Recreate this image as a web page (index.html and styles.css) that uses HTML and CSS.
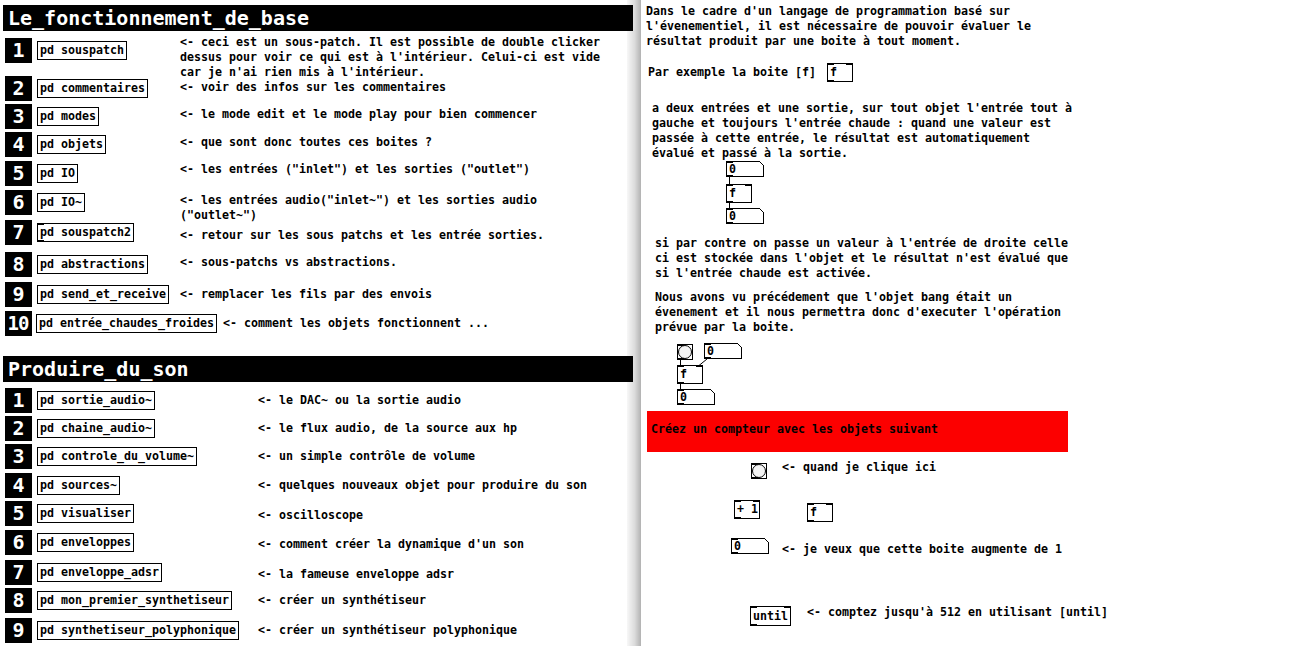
FILE: index.html
```html
<!DOCTYPE html>
<html lang="fr">
<head>
<meta charset="utf-8">
<title>Pd patch</title>
<link rel="stylesheet" href="styles.css">
</head>
<body>
<div class="desk">
  <section class="win-left">
    <div class="hdr">Le_fonctionnement_de_base</div>
    <div class="rows rows-a">
      <div class="row"><span class="num">1</span><span class="obj">pd souspatch</span><span class="cmt cmt-up">&lt;- ceci est un sous-patch. Il est possible de double clicker<br>dessus pour voir ce qui est à l'intérieur. Celui-ci est vide<br>car je n'ai rien mis à l'intérieur.</span></div>
      <div class="row"><span class="num">2</span><span class="obj">pd commentaires</span><span class="cmt">&lt;- voir des infos sur les commentaires</span></div>
      <div class="row"><span class="num">3</span><span class="obj">pd modes</span><span class="cmt">&lt;- le mode edit et le mode play pour bien commencer</span></div>
      <div class="row"><span class="num">4</span><span class="obj">pd objets</span><span class="cmt">&lt;- que sont donc toutes ces boites ?</span></div>
      <div class="row"><span class="num">5</span><span class="obj">pd IO</span><span class="cmt">&lt;- les entrées ("inlet") et les sorties ("outlet")</span></div>
      <div class="row"><span class="num">6</span><span class="obj">pd IO~</span><span class="cmt">&lt;- les entrées audio("inlet~") et les sorties audio<br>("outlet~")</span></div>
      <div class="row"><span class="num">7</span><span class="obj io">pd souspatch2</span><span class="cmt">&lt;- retour sur les sous patchs et les entrée sorties.</span></div>
      <div class="row"><span class="num">8</span><span class="obj">pd abstractions</span><span class="cmt">&lt;- sous-patchs vs abstractions.</span></div>
      <div class="row"><span class="num">9</span><span class="obj">pd send_et_receive</span><span class="cmt">&lt;- remplacer les fils par des envois</span></div>
      <div class="row row-wide"><span class="num num-2d">10</span><span class="obj">pd entrée_chaudes_froides</span><span class="cmt">&lt;- comment les objets fonctionnent ...</span></div>
    </div>

    <div class="hdr hdr-2">Produire_du_son</div>
    <div class="rows rows-b">
      <div class="row"><span class="num">1</span><span class="obj">pd sortie_audio~</span><span class="cmt">&lt;- le DAC~ ou la sortie audio</span></div>
      <div class="row"><span class="num">2</span><span class="obj">pd chaine_audio~</span><span class="cmt">&lt;- le flux audio, de la source aux hp</span></div>
      <div class="row"><span class="num">3</span><span class="obj">pd controle_du_volume~</span><span class="cmt">&lt;- un simple contrôle de volume</span></div>
      <div class="row"><span class="num">4</span><span class="obj">pd sources~</span><span class="cmt">&lt;- quelques nouveaux objet pour produire du son</span></div>
      <div class="row"><span class="num">5</span><span class="obj">pd visualiser</span><span class="cmt">&lt;- oscilloscope</span></div>
      <div class="row"><span class="num">6</span><span class="obj">pd enveloppes</span><span class="cmt">&lt;- comment créer la dynamique d'un son</span></div>
      <div class="row"><span class="num">7</span><span class="obj">pd enveloppe_adsr</span><span class="cmt">&lt;- la fameuse enveloppe adsr</span></div>
      <div class="row"><span class="num">8</span><span class="obj">pd mon_premier_synthetiseur</span><span class="cmt">&lt;- créer un synthétiseur</span></div>
      <div class="row"><span class="num">9</span><span class="obj">pd synthetiseur_polyphonique</span><span class="cmt">&lt;- créer un synthétiseur polyphonique</span></div>
    </div>
  </section>

  <section class="win-right">
    <svg class="wires" width="648" height="646" viewBox="0 0 648 646">
      <line x1="88.5" y1="176" x2="88.5" y2="184"/>
      <line x1="88.5" y1="203" x2="88.5" y2="208"/>
      <line x1="39.5" y1="360" x2="39.5" y2="365"/>
      <line x1="66" y1="359" x2="58" y2="365.5"/>
      <line x1="39.5" y1="384" x2="39.5" y2="389"/>
    </svg>

    <p class="node text t1">Dans le cadre d'un langage de programmation basé sur<br>l'évenementiel, il est nécessaire de pouvoir évaluer le<br>résultat produit par une boite à tout moment.</p>
    <p class="node text t2">Par exemple la boite [f]</p>
    <span class="node box io f1">f<i class="port-r"></i></span>
    <p class="node text t3">a deux entrées et une sortie, sur tout objet l'entrée tout à<br>gauche et toujours l'entrée chaude : quand une valeur est<br>passée à cette entrée, le résultat est automatiquement<br>évalué et passé à la sortie.</p>

    <span class="node atom io a1">0<i class="notch"></i></span>
    <span class="node box io f2">f<i class="port-r"></i></span>
    <span class="node atom io a2">0<i class="notch"></i></span>

    <p class="node text t4">si par contre on passe un valeur à l'entrée de droite celle<br>ci est stockée dans l'objet et le résultat n'est évalué que<br>si l'entrée chaude est activée.</p>
    <p class="node text t5">Nous avons vu précédement que l'objet bang était un<br>évenement et il nous permettra donc d'executer l'opération<br>prévue par la boite.</p>

    <span class="node bang io b1"><i class="dot"></i></span>
    <span class="node atom io a3">0<i class="notch"></i></span>
    <span class="node box io f3">f<i class="port-r"></i></span>
    <span class="node atom io a4">0<i class="notch"></i></span>

    <div class="node red">Créez un compteur avec les objets suivant</div>

    <span class="node bang io b2"><i class="dot"></i></span>
    <p class="node text t6">&lt;- quand je clique ici</p>

    <span class="node box io plus">+ 1<i class="port-r"></i></span>
    <span class="node box io f4">f<i class="port-r"></i></span>

    <span class="node atom io a5">0<i class="notch"></i></span>
    <p class="node text t7">&lt;- je veux que cette boite augmente de 1</p>

    <span class="node box io until">until<i class="port-r"></i></span>
    <p class="node text t8">&lt;- comptez jusqu'à 512 en utilisant [until]</p>
  </section>
</div>
</body>
</html>
```

FILE: styles.css
```css
html, body {
  margin: 0;
  padding: 0;
  background: #fff;
}

body {
  width: 1289px;
  height: 646px;
  overflow: hidden;
  font-family: "DejaVu Sans Mono", "Liberation Mono", monospace;
  font-weight: bold;
  font-size: 11.63px;
  color: #000;
}

.desk {
  position: relative;
  width: 1289px;
  height: 646px;
}

/* ---------- left window ---------- */
.win-left {
  padding-top: 5px;
  width: 641px;
}

.hdr {
  margin-left: 3px;
  width: 630px;
  height: 26px;
  box-sizing: border-box;
  padding-left: 5px;
  background: #000;
  color: #fff;
  font-size: 20px;
  line-height: 26px;
  font-weight: bold;
  white-space: nowrap;
}

.hdr-2 {
  margin-top: 15px;
}

.rows {
  display: grid;
}

.rows-a {
  margin-top: 7px;
  grid-template-rows: 38px 28px 28px 29px 29px 30px 32px 30px 29px 30px;
}

.rows-b {
  margin-top: 6px;
  grid-template-rows: 28px 28px 29px 28px 29px 30px 28px 30px 28px;
}

.row {
  display: grid;
  grid-template-columns: 37px 143px 1fr;
  align-items: start;
}

.rows-b .row {
  grid-template-columns: 37px 221px 1fr;
}

.row.row-wide {
  grid-template-columns: 36px auto 1fr;
}

.row-wide .cmt {
  margin-left: 6px;
}

.num {
  margin-left: 5px;
  width: 27px;
  height: 25px;
  background: #000;
  color: #fff;
  font-size: 20px;
  line-height: 25px;
  text-align: center;
  font-weight: bold;
}

.num-2d {
  letter-spacing: -1px;
  font-size: 19px;
  text-indent: -1px;
}

.obj {
  position: relative;
  justify-self: start;
  margin-top: 3px;
  height: 19px;
  box-sizing: border-box;
  border: 1px solid #000;
  padding: 0 2px;
  line-height: 17px;
  white-space: nowrap;
}

.cmt {
  margin-top: 3px;
  line-height: 15px;
  white-space: nowrap;
}

/* comments in Pd are placed freely; small per-row offsets */
.rows-a .row:nth-child(2) .cmt { margin-top: 4px; }
.rows-a .row:nth-child(5) .cmt { margin-top: 1px; }
.rows-a .row:nth-child(7) .cmt { margin-top: 8px; }
.rows-a .row:nth-child(9) .cmt,
.rows-a .row:nth-child(10) .cmt { margin-top: 5px; }

.rows-b .cmt {
  margin-top: 5px;
}

.rows-b .row:nth-child(5) .cmt,
.rows-b .row:nth-child(6) .cmt,
.rows-b .row:nth-child(7) .cmt { margin-top: 7px; }

.cmt.cmt-up {
  margin-top: -3px;
}

/* inlets / outlets drawn over the box corners */
.io::before,
.io::after {
  content: "";
  position: absolute;
  left: -1px;
  width: 7px;
  height: 2px;
  background: #000;
}

.io::before {
  top: -1px;
}

.io::after {
  bottom: -1px;
}

.port-r {
  position: absolute;
  top: -1px;
  right: -1px;
  width: 7px;
  height: 2px;
  background: #000;
}

/* ---------- right window ---------- */
.win-right {
  position: absolute;
  left: 641px;
  top: 0;
  width: 648px;
  height: 646px;
  background: #fff;
}

.win-right::before {
  content: "";
  position: absolute;
  left: -14px;
  top: 0;
  width: 14px;
  height: 100%;
  background: linear-gradient(to right, rgba(0, 0, 0, 0.03), rgba(0, 0, 0, 0.14) 55%, rgba(0, 0, 0, 0.3));
}

.wires {
  position: absolute;
  left: 0;
  top: 0;
  stroke: #000;
  stroke-width: 1;
  fill: none;
}

.node {
  position: absolute;
  margin: 0;
}

.text {
  line-height: 15px;
  white-space: nowrap;
}

.box {
  height: 19px;
  box-sizing: border-box;
  border: 1px solid #000;
  padding: 0 2px;
  line-height: 17px;
  white-space: nowrap;
  background: #fff;
}

.atom {
  height: 16px;
  box-sizing: border-box;
  border: 1px solid #000;
  padding: 0 2px;
  line-height: 14px;
  background: #fff;
}

.notch {
  position: absolute;
  top: -1px;
  right: -1px;
  width: 5px;
  height: 5px;
  background: linear-gradient(45deg, transparent calc(50% - 0.6px), #000 calc(50% - 0.6px), #000 calc(50% + 0.6px), #fff calc(50% + 0.6px));
}

.bang {
  width: 16px;
  height: 16px;
  box-sizing: border-box;
  border: 1px solid #000;
  background: #fff;
}

.dot {
  position: absolute;
  left: 0;
  top: 0;
  width: 14px;
  height: 14px;
  box-sizing: border-box;
  border: 1px solid #000;
  border-radius: 50%;
  background: #f4f4f4;
}

.red {
  left: 6px;
  top: 411px;
  width: 421px;
  height: 41px;
  box-sizing: border-box;
  padding: 11px 0 0 4px;
  background: #fc0000;
  line-height: 15px;
  white-space: nowrap;
}

/* positions on the canvas of the right patch window */
.t1 { left: 5px; top: 4px; }
.t2 { left: 7px; top: 65px; }
.f1 { left: 186px; top: 63px; width: 26px; }
.t3 { left: 11px; top: 101px; }
.a1 { left: 85px; top: 161px; width: 38px; }
.f2 { left: 85px; top: 184px; width: 26px; }
.a2 { left: 85px; top: 208px; width: 38px; }
.t4 { left: 14px; top: 236px; }
.t5 { left: 14px; top: 290px; }
.b1 { left: 36px; top: 344px; }
.a3 { left: 63px; top: 343px; width: 38px; }
.f3 { left: 36px; top: 365px; width: 26px; }
.a4 { left: 36px; top: 389px; width: 38px; }
.b2 { left: 110px; top: 463px; }
.t6 { left: 141px; top: 460px; }
.plus { left: 93px; top: 500px; width: 26px; }
.f4 { left: 166px; top: 503px; width: 26px; }
.a5 { left: 90px; top: 538px; width: 38px; }
.t7 { left: 141px; top: 542px; }
.until { left: 109px; top: 606px; height: 20px; line-height: 18px; }
.t8 { left: 166px; top: 605px; }
```
